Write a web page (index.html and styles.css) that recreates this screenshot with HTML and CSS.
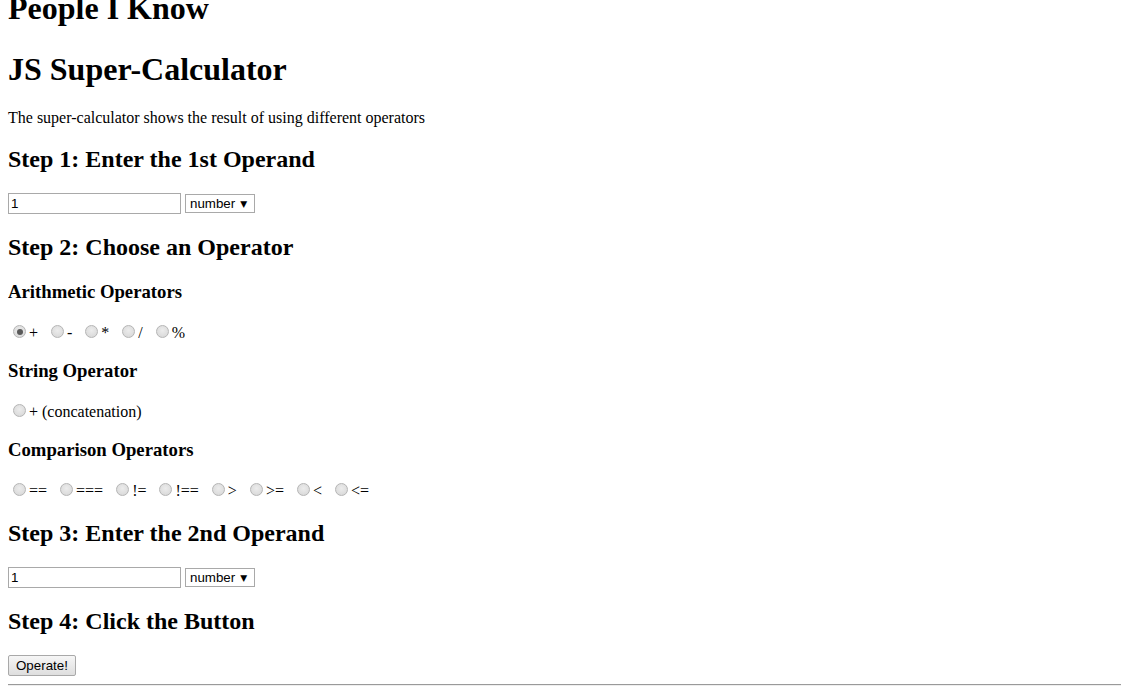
FILE: index.html
```html
<!DOCTYPE html>
<html>
<head>
<meta charset="utf-8">
<title>JS Super-Calculator</title>
<link rel="stylesheet" href="styles.css">
</head>
<body>
<h1 class="site-title">People I Know</h1>
<h1>JS Super-Calculator</h1>
<p>The super-calculator shows the result of using different operators</p>

<h2 class="first-step">Step 1: Enter the 1st Operand</h2>
<div class="operand">
  <input class="text-in" type="text" value="1">
  <span class="select-box">number</span>
</div>

<h2>Step 2: Choose an Operator</h2>
<h3>Arithmetic Operators</h3>
<p class="radios">
  <span class="opt"><span class="radio checked"></span><span class="lbl">+</span></span>
  <span class="opt"><span class="radio"></span><span class="lbl">-</span></span>
  <span class="opt"><span class="radio"></span><span class="lbl">*</span></span>
  <span class="opt"><span class="radio"></span><span class="lbl">/</span></span>
  <span class="opt"><span class="radio"></span><span class="lbl">%</span></span>
</p>
<h3>String Operator</h3>
<p class="radios">
  <span class="opt"><span class="radio"></span><span class="lbl">+ (concatenation)</span></span>
</p>
<h3>Comparison Operators</h3>
<p class="radios">
  <span class="opt"><span class="radio"></span><span class="lbl">==</span></span>
  <span class="opt"><span class="radio"></span><span class="lbl">===</span></span>
  <span class="opt"><span class="radio"></span><span class="lbl">!=</span></span>
  <span class="opt"><span class="radio"></span><span class="lbl">!==</span></span>
  <span class="opt"><span class="radio"></span><span class="lbl">&gt;</span></span>
  <span class="opt"><span class="radio"></span><span class="lbl">&gt;=</span></span>
  <span class="opt"><span class="radio"></span><span class="lbl">&lt;</span></span>
  <span class="opt"><span class="radio"></span><span class="lbl">&lt;=</span></span>
</p>

<h2>Step 3: Enter the 2nd Operand</h2>
<div class="operand">
  <input class="text-in" type="text" value="1">
  <span class="select-box">number</span>
</div>

<h2>Step 4: Click the Button</h2>
<div class="operand">
  <button class="btn">Operate!</button>
</div>
<hr class="rule">
</body>
</html>
```

FILE: styles.css
```css
html { background: #fff; }
body {
  margin: 0 8px;
  font-family: "Liberation Serif", "Times New Roman", serif;
  font-size: 16px;
  color: #000;
  overflow: hidden;
}
h1 { font-size: 32px; margin: 21px 0; line-height: 37px; }
h1.site-title { margin-top: -10px; margin-bottom: 24px; }
h2 { font-size: 24px; margin: 19px 0 20px; line-height: 28px; }
h2.first-step { margin-top: 18px; }
h3 { font-size: 18.72px; margin: 18px 0; line-height: 22px; }
p { margin: 16px 0; line-height: 18px; }

.operand { display: flex; align-items: center; gap: 4px; height: 21px; }
.text-in {
  box-sizing: border-box;
  width: 173px; height: 21px;
  margin: 0;
  padding: 1px 2px;
  border: 1px solid #a9a9a9;
  font-family: "Liberation Sans", Arial, sans-serif;
  font-size: 13.33px;
  color: #000;
  outline: none;
}
.select-box {
  box-sizing: border-box;
  height: 19px;
  display: inline-flex; align-items: center;
  padding: 0 7px 0 4px;
  border: 1px solid #a9a9a9;
  font-family: "Liberation Sans", Arial, sans-serif;
  font-size: 13.33px;
  color: #000;
  background: #fff;
}
.select-box::after {
  content: "\25BC";
  font-family: "DejaVu Sans", sans-serif;
  font-size: 9px;
  margin-left: 5px;
  color: #000;
}

.radios { display: flex; align-items: center; flex-wrap: wrap; height: 21px; }
.opt { display: inline-flex; align-items: center; margin-right: 8px; }
.radio {
  box-sizing: border-box;
  width: 13px; height: 13px;
  margin: 0 3px 0 5px;
  border-radius: 50%;
  border: 1px solid #b5b5b5;
  background: radial-gradient(circle at 50% 40%, #ececec 0%, #dcdcdc 70%, #d0d0d0 100%);
  position: relative;
}
.radio.checked::after {
  content: "";
  position: absolute;
  left: 2.5px; top: 2.5px;
  width: 6px; height: 6px;
  border-radius: 50%;
  background: #595959;
}
.lbl { line-height: 18px; padding-top: 2px; }

.btn {
  margin: 0;
  box-sizing: border-box;
  height: 21px;
  padding: 1px 7px;
  border: 1px solid #a9a9a9;
  border-radius: 2px;
  background: linear-gradient(#f6f6f6, #dedede);
  font-family: "Liberation Sans", Arial, sans-serif;
  font-size: 13.33px;
  color: #000;
}
.rule {
  margin: 8px 0 0;
  border: 0;
  border-top: 1px solid #9a9a9a;
  border-bottom: 1px solid #eee;
}
```
